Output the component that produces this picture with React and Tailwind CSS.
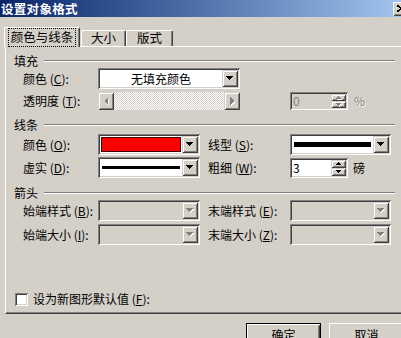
import React from "react";

const sunken =
  "shadow-[inset_1px_1px_0_#808080,inset_-1px_-1px_0_#ffffff,inset_2px_2px_0_#404040,inset_-2px_-2px_0_#d4d0c8]";
const raised =
  "shadow-[inset_1px_1px_0_#d4d0c8,inset_-1px_-1px_0_#404040,inset_2px_2px_0_#ffffff,inset_-2px_-2px_0_#808080]";
const btnRaised =
  "shadow-[inset_1px_1px_0_#ffffff,inset_-1px_-1px_0_#404040,inset_2px_2px_0_#d4d0c8,inset_-2px_-2px_0_#808080]";

const Arrow = ({ dir = "down", disabled, small }) => {
  const shapes = small
    ? { up: "0,3 5,3 2.5,0", down: "0,0 5,0 2.5,3" }
    : {
        down: "0,0 7,0 3.5,4",
        left: "4,0 4,8 0,4",
        right: "0,0 0,8 4,4",
      };
  const w = small ? 6 : dir === "down" ? 8 : 5;
  const h = small ? 4 : dir === "down" ? 5 : 9;
  return (
    <svg width={w} height={h} shapeRendering="crispEdges">
      {disabled && <polygon points={shapes[dir]} fill="#ffffff" transform="translate(1,1)" />}
      <polygon points={shapes[dir]} fill={disabled ? "#808080" : "#000000"} />
    </svg>
  );
};

const Key = ({ k }) => (
  <>
    {" ("}
    <span className="underline underline-offset-1">{k}</span>
    {"):"}
  </>
);

const Combo = ({ className, disabled, children }) => (
  <div className={`${sunken} ${disabled ? "bg-[#d4d0c8]" : "bg-white"} flex p-[2px] ${className}`}>
    <div className="flex-1 min-w-0 flex items-center">{children}</div>
    <div className={`${raised} w-[16px] bg-[#d4d0c8] flex items-center justify-center`}>
      <Arrow dir="down" disabled={disabled} />
    </div>
  </div>
);

const Spin = ({ value, disabled, className }) => (
  <div className={`${sunken} ${disabled ? "bg-[#d4d0c8] text-[#808080]" : "bg-white text-black"} flex p-[2px] w-[58px] ${className}`}>
    <div className="flex-1 pl-[1px] flex items-center text-[12px] leading-none">{value}</div>
    <div className="w-[15px] flex flex-col">
      <div className={`${raised} flex-1 bg-[#d4d0c8] flex items-center justify-center`}>
        <Arrow dir="up" small disabled={disabled} />
      </div>
      <div className={`${raised} flex-1 bg-[#d4d0c8] flex items-center justify-center`}>
        <Arrow dir="down" small disabled={disabled} />
      </div>
    </div>
  </div>
);

const Header = ({ children, className }) => (
  <div className={`flex items-center h-[14px] pl-[8px] w-[389px] ${className}`}>
    <span className="text-[12px] leading-none">{children}</span>
    <div className="flex-1 ml-[6px] h-[2px] border-t border-t-[#808080] border-b border-b-white" />
  </div>
);

const Label = ({ children, className = "" }) => (
  <div className={`text-[12px] leading-none whitespace-nowrap ${className}`}>{children}</div>
);

export default function App() {
  return (
    <div className="w-[401px] h-[338px] overflow-hidden bg-[#d4d0c8] text-black font-['Noto_Sans_CJK_SC',sans-serif]">
      <div className="w-[412px]">
        {/* title bar */}
        <div className="h-[17px] flex items-center bg-gradient-to-r from-[#0a246a] to-[#a6caf0]">
          <span className="pl-[1px] text-white font-bold text-[12.5px] tracking-[0.3px] leading-[16px]">设置对象格式</span>
          <div className="flex-1" />
          <div className={`${btnRaised} w-[16px] h-[14px] mr-[3px] bg-[#d4d0c8] flex items-center justify-center`}>
            <svg width="8" height="7" shapeRendering="crispEdges">
              <path d="M0 0 L8 7 M8 0 L0 7" stroke="#000" strokeWidth="1.6" />
            </svg>
          </div>
        </div>

        {/* tabs */}
        <div className="relative z-10 flex items-end h-[20px] mt-[10px] pl-[4px]">
          <div className="h-[20px] w-[76px] bg-[#d4d0c8] rounded-t-[2px] border-t border-l border-white border-r border-r-[#404040] shadow-[inset_-1px_0_0_#808080] flex items-start justify-center pt-[1px]">
            <span className="outline outline-1 outline-dotted outline-black px-[2px] py-[2px] text-[12.5px] leading-none">
              颜色与线条
            </span>
          </div>
          <div className="h-[16px] mb-[1px] ml-[1px] w-[45px] rounded-t-[2px] border-t border-l border-white border-r border-r-[#404040] shadow-[inset_-1px_0_0_#808080] flex items-center justify-center text-[12.5px] leading-none">
            大小
          </div>
          <div className="h-[16px] mb-[1px] w-[47px] rounded-t-[2px] border-t border-l border-white border-r border-r-[#404040] shadow-[inset_-1px_0_0_#808080] flex items-center justify-center text-[12.5px] leading-none">
            版式
          </div>
        </div>

        {/* panel */}
        <div className="ml-[5px] mr-[5px] -mt-[1px] h-[268px] border-t border-l border-white border-b border-b-[#404040] border-r border-r-[#404040] shadow-[inset_-1px_-1px_0_#808080] flex flex-col">
          <Header className="mt-[7px]">填充</Header>
          <div className="flex items-center h-[21px] pl-[17px]">
            <Label className="w-[75px]">颜色<Key k="C" /></Label>
            <Combo className="w-[142px] h-[21px]">
              <span className="flex-1 text-center text-[12px] leading-none">无填充颜色</span>
            </Combo>
          </div>
          <div className="flex items-center h-[18px] mt-[3px] pl-[17px]">
            <Label className="w-[75px]">透明度<Key k="T" /></Label>
            <div className="w-[142px] h-[18px] flex">
              <div className={`${raised} w-[16px] bg-[#d4d0c8] flex items-center justify-center`}>
                <Arrow dir="left" disabled />
              </div>
              <div className="flex-1 bg-[image:repeating-conic-gradient(#ffffff_0_25%,#d4d0c8_0_50%)] bg-[length:2px_2px]" />
              <div className={`${raised} w-[16px] bg-[#d4d0c8] flex items-center justify-center`}>
                <Arrow dir="right" disabled />
              </div>
            </div>
            <Spin value="0" disabled className="h-[18px] ml-[50px]" />
            <span className="ml-[6px] text-[12px] leading-none text-[#808080] [text-shadow:1px_1px_0_#ffffff]">%</span>
          </div>

          <Header className="mt-[8px]">线条</Header>
          <div className="flex items-center h-[21px] mt-[2px] pl-[17px]">
            <Label className="w-[75px]">颜色<Key k="O" /></Label>
            <Combo className="w-[102px] h-[21px]">
              <div className="flex-1 h-full p-[1px]">
                <div className="h-full bg-[#ff0000] border border-[#400000]" />
              </div>
            </Combo>
            <Label className="w-[82px] ml-[8px]">线型<Key k="S" /></Label>
            <Combo className="w-[101px] h-[21px]">
              <div className="flex-1 mx-[2px] h-[5px] bg-black" />
            </Combo>
          </div>
          <div className="flex items-center h-[21px] mt-[2px] pl-[17px]">
            <Label className="w-[75px]">虚实<Key k="D" /></Label>
            <Combo className="w-[102px] h-[21px]">
              <div className="flex-1 mx-[2px] h-[3px] bg-black" />
            </Combo>
            <Label className="w-[82px] ml-[8px]">粗细<Key k="W" /></Label>
            <Spin value="3" className="h-[20px]" />
            <span className="ml-[5px] text-[12px] leading-none">磅</span>
          </div>

          <Header className="mt-[8px]">箭头</Header>
          <div className="flex items-center h-[21px] pl-[17px]">
            <Label className="w-[75px]">始端样式<Key k="B" /></Label>
            <Combo disabled className="w-[102px] h-[21px]" />
            <Label className="w-[82px] ml-[8px]">末端样式<Key k="E" /></Label>
            <Combo disabled className="w-[101px] h-[21px]" />
          </div>
          <div className="flex items-center h-[21px] mt-[3px] pl-[17px]">
            <Label className="w-[75px]">始端大小<Key k="I" /></Label>
            <Combo disabled className="w-[102px] h-[21px]" />
            <Label className="w-[82px] ml-[8px]">末端大小<Key k="Z" /></Label>
            <Combo disabled className="w-[101px] h-[21px]" />
          </div>

          <div className="flex items-center h-[16px] mt-[46px] pl-[9px]">
            <div className={`${sunken} w-[13px] h-[13px] bg-white`} />
            <span className="ml-[5px] text-[12px] leading-none">
              设为新图形默认值<Key k="F" />
            </span>
          </div>
        </div>

        {/* buttons */}
        <div className="flex justify-end gap-[8px] pr-[8px] mt-[9px]">
          <div className="w-[75px] h-[23px] border border-black">
            <div className={`${btnRaised} h-full bg-[#d4d0c8] flex items-center justify-center text-[12px] leading-none`}>
              确定
            </div>
          </div>
          <div className={`${btnRaised} w-[75px] h-[23px] bg-[#d4d0c8] flex items-center justify-center text-[12px] leading-none`}>
            取消
          </div>
        </div>
      </div>
    </div>
  );
}
